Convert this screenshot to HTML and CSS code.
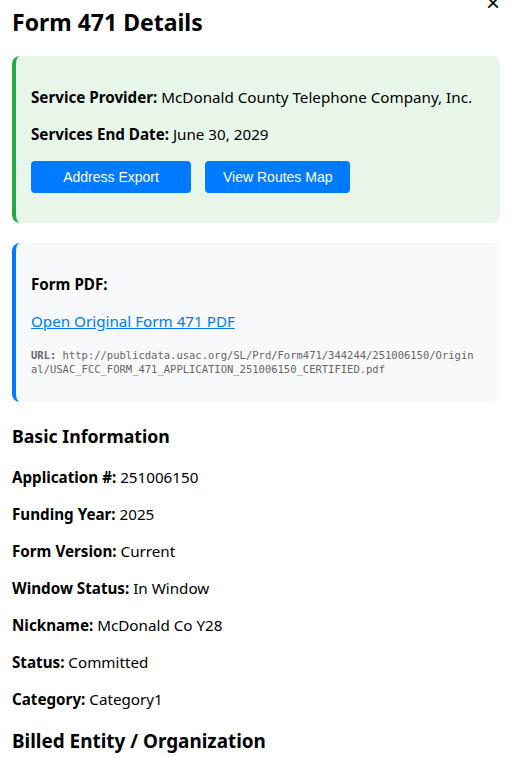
FILE: index.html
```html
<!DOCTYPE html>
<html lang="en">
<head>
<meta charset="utf-8">
<title>Form 471 Details</title>
<link rel="stylesheet" href="styles.css">
</head>
<body>
<div class="modal">
  <button class="close" aria-label="Close">×</button>
  <h2 class="title">Form 471 Details</h2>

  <div class="card card-green">
    <p><strong>Service Provider:</strong> McDonald County Telephone Company, Inc.</p>
    <p><strong>Services End Date:</strong> June 30, 2029</p>
    <div class="actions">
      <button class="btn btn-wide">Address Export</button>
      <button class="btn">View Routes Map</button>
    </div>
  </div>

  <div class="card card-blue">
    <p><strong>Form PDF:</strong></p>
    <p><a class="link" href="#">Open Original Form 471 PDF</a></p>
    <div class="url"><strong>URL:</strong> http://publicdata.usac.org/SL/Prd/Form471/344244/251006150/Original/USAC_FCC_FORM_471_APPLICATION_251006150_CERTIFIED.pdf</div>
  </div>

  <h3 class="section">Basic Information</h3>
  <p><strong>Application #:</strong> 251006150</p>
  <p><strong>Funding Year:</strong> 2025</p>
  <p><strong>Form Version:</strong> Current</p>
  <p><strong>Window Status:</strong> In Window</p>
  <p><strong>Nickname:</strong> McDonald Co Y28</p>
  <p><strong>Status:</strong> Committed</p>
  <p><strong>Category:</strong> Category1</p>

  <h3 class="section section-lg">Billed Entity / Organization</h3>
</div>
</body>
</html>
```
FILE: styles.css
```css
html, body {
  margin: 0;
  padding: 0;
  background: #fff;
}
body {
  font-family: "Noto Sans", "Open Sans", sans-serif;
  font-size: 15.2px;
  line-height: 21px;
  color: #000;
}
.modal {
  position: relative;
  padding: 6px 12px 0;
  height: 758px;
  overflow: hidden;
  box-sizing: border-box;
}
.close {
  position: absolute;
  top: -9px;
  right: 12px;
  border: none;
  background: none;
  padding: 0;
  font-family: Arial, "Liberation Sans", sans-serif;
  font-size: 24px;
  line-height: 24px;
  color: #000;
}
.title {
  margin: 0 0 18px;
  font-size: 23px;
  line-height: 32px;
  font-weight: 700;
}
p {
  margin: 16px 0;
}
.card {
  border-radius: 8px;
  padding: 15px;
  margin-bottom: 20px;
}
.card-green {
  background: #e8f5e9;
  border-left: 4px solid #28a745;
}
.card-blue {
  background: #f8f9fa;
  border-left: 4px solid #007bff;
}
.actions {
  display: flex;
  gap: 14px;
  margin: 16px 0 15px;
}
.btn {
  height: 32px;
  padding: 0 18px;
  border: none;
  border-radius: 4px;
  background: #007bff;
  color: #fff;
  font-family: "Liberation Sans", Arial, sans-serif;
  font-size: 14px;
}
.btn-wide {
  width: 160px;
}
.link {
  color: #007bff;
  text-decoration: underline;
}
.url {
  max-width: 446px;
  margin: 16px 0 11px;
  font-family: "DejaVu Sans Mono", monospace;
  font-size: 10.5px;
  line-height: 14px;
  color: #666;
  word-break: break-all;
}
.section {
  margin: 22px 0 18px;
  font-size: 17.7px;
  line-height: 25px;
}
.section-lg {
  margin-top: 18px;
  font-size: 18.9px;
  line-height: 26px;
}
```
